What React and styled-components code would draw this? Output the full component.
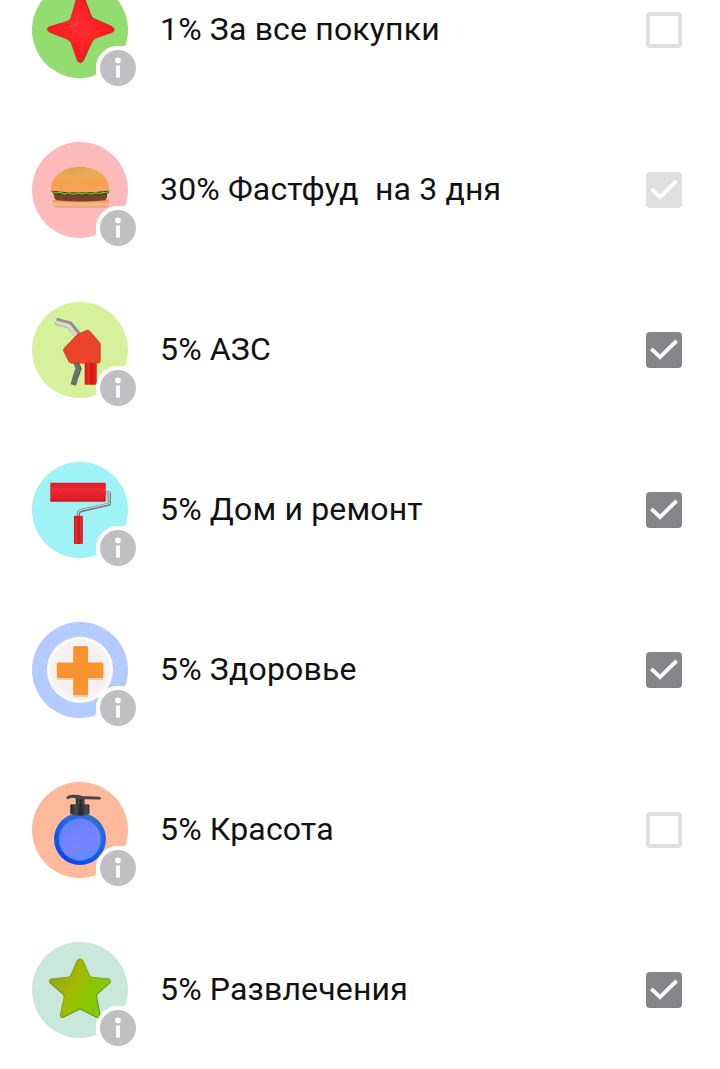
import React from "react";
import styled, { createGlobalStyle } from "styled-components";

const GlobalStyle = createGlobalStyle`
  body {
    margin: 0;
    background-color: #ffffff;
  }
`;

const Screen = styled.main`
  height: 1069px;
  overflow: hidden;
  font-family: Roboto, "Noto Sans", sans-serif;
`;

const List = styled.ul`
  margin: -50px 0 0;
  padding: 0;
  list-style: none;
`;

const Row = styled.li`
  display: flex;
  align-items: center;
  box-sizing: border-box;
  height: 160px;
  padding: 0 38px 0 32px;
`;

const IconSvg = styled.svg`
  flex: none;
  width: 104px;
  height: 104px;
  margin: 8px 24px 0 0;
`;

const Title = styled.span`
  flex: 1;
  font-size: 32px;
  line-height: 40px;
  letter-spacing: 0.16px;
  white-space: pre;
  color: #111113;
  margin-top: -2px;
`;

const Box = styled.span`
  display: block;
  box-sizing: border-box;
  width: 36px;
  height: 36px;
  border-radius: 4px;
  border: ${(props) => (props.$checked ? "none" : "4px solid #e0e0e0")};
  background-color: ${(props) =>
    !props.$checked ? "#ffffff" : props.$disabled ? "#e0e0e0" : "#858489"};
  svg {
    display: block;
  }
`;

const Sparkle = () => (
  <g>
    <defs>
      <radialGradient id="sparkle" cx="0.48" cy="0.48" r="0.5">
        <stop offset="0" stopColor="#ff3034" />
        <stop offset="0.5" stopColor="#fd2024" />
        <stop offset="1" stopColor="#f01c1f" />
      </radialGradient>
    </defs>
    <path
      d="M44.8 15.5Q48.3 10.5 52.2 15.5L58.8 33Q59.8 36 62.5 37.3L80.3 44.8Q84 47.6 80.5 50.3L63.4 56.3Q60.8 57.3 59.6 60L51.3 78.6Q48.3 83 45.3 78.6L39.4 61.5Q38.3 58.6 35.5 57.2L17.3 50Q13.5 47.3 17 44.8L35.5 39.3Q38.3 38 39.2 35Z"
      fill="url(#sparkle)"
      stroke="#d52a1f"
      strokeWidth="0.7"
    />
    <path
      d="M52.5 16.5L59.4 35.2L80 44.6M62.5 57L59 62L51.3 78.4"
      fill="none"
      stroke="#8f2b18"
      strokeWidth="0.8"
      opacity="0.6"
    />
    <path
      d="M48 20L44.5 43L22 47.5M49 75L51 53L72 48"
      fill="none"
      stroke="#ff5050"
      strokeWidth="1.5"
      opacity="0.22"
    />
  </g>
);

const Burger = () => (
  <g>
    <defs>
      <radialGradient id="bun" cx="0.4" cy="0.1" r="0.95">
        <stop offset="0" stopColor="#d9a355" />
        <stop offset="0.35" stopColor="#eea955" />
        <stop offset="0.75" stopColor="#fba04a" />
        <stop offset="1" stopColor="#f0a566" />
      </radialGradient>
      <linearGradient id="heel" x1="0" y1="0" x2="0" y2="1">
        <stop offset="0" stopColor="#dc9153" />
        <stop offset="0.5" stopColor="#f7b98d" />
        <stop offset="1" stopColor="#eba674" />
      </linearGradient>
    </defs>
    <path
      d="M20.5 58Q48 60 76.5 57.5Q77.3 60 76.8 63Q76 66 72 66H25Q20.5 65.5 20.3 61Z"
      fill="url(#heel)"
    />
    <path
      d="M21.5 51H75Q75.5 56.5 73 58.2Q48 61 24 58.2Q21.7 56 21.5 51Z"
      fill="#7a4027"
    />
    <path
      d="M19 48.5H77.5L76.7 51Q74 52.7 71 51.7Q67 53.5 63 51.8Q58 54 54 52.2Q50 54 46 52.3Q42 54 38 52Q33 53.5 29 51.8Q26 53 22 51.4Q19.5 51 19 48.5Z"
      fill="#24370f"
    />
    <path
      d="M19.7 49.3Q24 52 28 50.2Q33 53 37 50.8Q42 53.3 46 51Q50 53 54 51Q59 53 63 50.7Q68 52.4 71 50.3Q75 51.3 77 49"
      fill="none"
      stroke="#6fc52d"
      strokeWidth="1.3"
    />
    <path
      d="M19.2 47C19 33 33 24.7 48 24.7C64 24.7 77 34 77 46.5Q77 48.8 74 49Q48 52 22 49Q19.3 48.8 19.2 47Z"
      fill="url(#bun)"
    />
  </g>
);

const FuelNozzle = () => (
  <g>
    <defs>
      <linearGradient id="grip" x1="0" y1="0" x2="1" y2="0">
        <stop offset="0" stopColor="#c91814" />
        <stop offset="0.3" stopColor="#f02a22" />
        <stop offset="0.6" stopColor="#c9120f" />
        <stop offset="0.85" stopColor="#ee2520" />
        <stop offset="1" stopColor="#bf1713" />
      </linearGradient>
    </defs>
    <path
      d="M24 19.2L37.5 22.8L46.5 34"
      fill="none"
      stroke="#8f9182"
      strokeWidth="7"
      strokeLinejoin="round"
    />
    <path
      d="M24 20.2L36.8 23.9L45 34.5"
      fill="none"
      stroke="#dcd6d0"
      strokeWidth="4"
      strokeLinejoin="round"
    />
    <path
      d="M43.5 59L46.6 66.5L43.7 74.5L41.3 83"
      fill="none"
      stroke="#6a706c"
      strokeWidth="5.8"
      strokeLinejoin="round"
    />
    <path
      d="M45.5 61L49 66.5L46 75"
      fill="none"
      stroke="#4f5651"
      strokeWidth="0.8"
    />
    <rect x="52.7" y="58" width="12" height="24.7" rx="0.8" fill="url(#grip)" />
    <path
      d="M45.5 32.5L54.5 28.5Q56.5 27.7 58 29.5L67.2 40.2Q68.2 41.5 68.2 43V59.5Q68 61 66.5 61H39.5Q37.5 61 36.7 59L31.8 49.3Q31 47.8 32.3 46.3L44 34Z"
      fill="#ec432c"
      stroke="#d2331f"
      strokeWidth="0.9"
    />
  </g>
);

const PaintRoller = () => (
  <g>
    <defs>
      <linearGradient id="roller" x1="0" y1="0" x2="0" y2="1">
        <stop offset="0" stopColor="#dc1b28" />
        <stop offset="0.3" stopColor="#ef2935" />
        <stop offset="0.75" stopColor="#e5212d" />
        <stop offset="1" stopColor="#c81620" />
      </linearGradient>
      <linearGradient id="handle" x1="0" y1="0" x2="1" y2="0">
        <stop offset="0" stopColor="#c4181a" />
        <stop offset="0.3" stopColor="#ee2a2b" />
        <stop offset="0.55" stopColor="#c91315" />
        <stop offset="0.75" stopColor="#f02829" />
        <stop offset="1" stopColor="#b91517" />
      </linearGradient>
    </defs>
    <path
      d="M73 31H77.3V42.2L49 48.6Q46.4 49.3 46.4 52V55"
      fill="none"
      stroke="#6c7778"
      strokeWidth="3.2"
      strokeLinejoin="round"
    />
    <path
      d="M73 31H77.2V41.7L49 48.1Q46.2 49 46.2 52V55"
      fill="none"
      stroke="#cbd0cd"
      strokeWidth="1.3"
      strokeLinejoin="round"
    />
    <rect x="18.2" y="20.8" width="55.6" height="18.9" rx="1" fill="url(#roller)" />
    <path
      d="M22 25H70M24 29.5H69M21 34H71"
      stroke="#c81c2b"
      strokeWidth="0.8"
      strokeDasharray="1.5 2.7 0.8 1.9"
      opacity="0.65"
    />
    <rect x="42" y="53.7" width="8.8" height="28.4" rx="1" fill="url(#handle)" />
  </g>
);

const Health = () => (
  <g>
    <defs>
      <radialGradient id="plate" cx="0.5" cy="0.5" r="0.5">
        <stop offset="0.7" stopColor="#f4f0f0" />
        <stop offset="0.9" stopColor="#f7f4f4" />
        <stop offset="0.96" stopColor="#ffffff" />
        <stop offset="1" stopColor="#eaf0fb" />
      </radialGradient>
    </defs>
    <circle cx="48" cy="47.8" r="33.2" fill="url(#plate)" />
    <path
      d="M42 27H55V42.5H71V58H56V75H41.5V58H25V42.5H42Z"
      fill="#f7c39a"
      opacity="0.8"
    />
    <path
      d="M42.5 24.4H54.8Q56 24.4 56 25.6V40.5H70.2Q71.4 40.5 71.4 41.7V54.7Q71.4 55.8 70.2 55.8H56V71.9Q56 73 54.8 73H42.3Q41.2 73 41.2 71.9V55.8H25.9Q24.8 55.8 24.8 54.7V41.7Q24.8 40.5 25.9 40.5H41.2V25.6Q41.2 24.4 42.5 24.4Z"
      fill="#fa942f"
    />
    <path
      d="M41.8 24.8H55.4M25.3 55.3H41M56 55.3H71"
      fill="none"
      stroke="#ee8a37"
      strokeWidth="0.9"
    />
  </g>
);

const Bottle = () => (
  <g>
    <defs>
      <linearGradient id="glass" x1="0.85" y1="0" x2="0.3" y2="1">
        <stop offset="0" stopColor="#356ebd" />
        <stop offset="0.35" stopColor="#2467e0" />
        <stop offset="1" stopColor="#0746ed" />
      </linearGradient>
      <linearGradient id="liquid" x1="0.2" y1="0" x2="0.7" y2="1">
        <stop offset="0" stopColor="#6580fc" />
        <stop offset="0.6" stopColor="#7785ff" />
        <stop offset="1" stopColor="#628bff" />
      </linearGradient>
      <linearGradient id="cap" x1="0" y1="0" x2="1" y2="0">
        <stop offset="0" stopColor="#252729" />
        <stop offset="0.3" stopColor="#4b4c4e" />
        <stop offset="0.55" stopColor="#252628" />
        <stop offset="0.85" stopColor="#4d4e50" />
        <stop offset="1" stopColor="#292a2b" />
      </linearGradient>
    </defs>
    <circle cx="48" cy="57" r="26" fill="url(#glass)" />
    <circle cx="48" cy="57.4" r="21" fill="url(#liquid)" stroke="#3a7af9" strokeWidth="1" />
    <rect x="43.8" y="15" width="8.7" height="9" fill="url(#cap)" />
    <path d="M38.3 23.5Q38.3 22.3 39.5 22.3H56.2Q57.4 22.3 57.4 23.5V32Q48 35.3 38.3 32Z" fill="url(#cap)" />
    <path
      d="M34.2 15.2Q37 12.8 41 12.8Q46 12.6 51 14.2L68 14.7Q69.7 15.8 68.3 17.5L53 17.2Q45 17.8 42 15.9Q39 15.3 35.8 17.2Q34 16.8 34.2 15.2Z"
      fill="#444447"
    />
  </g>
);

const Star = () => (
  <g>
    <defs>
      <linearGradient id="star" x1="0.1" y1="0.25" x2="0.9" y2="0.65">
        <stop offset="0" stopColor="#8fa90e" />
        <stop offset="0.35" stopColor="#a6b600" />
        <stop offset="0.65" stopColor="#8dc500" />
        <stop offset="1" stopColor="#83c90c" />
      </linearGradient>
    </defs>
    <path
      d="M45.2 18.4Q48 15.5 50.9 18.4L57.4 33Q58.3 34.9 60.4 35.3L77 36.9Q80.2 38 77.9 41L65.2 52.2Q64 53.5 64.3 55.5L68.2 73.7Q67.8 76.6 64.8 75.6L50 67.8Q48 66.8 46 67.8L31.2 75.6Q28 76.5 28.2 73.5L32 55.7Q32.4 53.5 30.8 52L18 41Q15.8 38 19 36.9L35.6 35.3Q38 34.9 38.9 32.8Z"
      fill="url(#star)"
      stroke="#799713"
      strokeWidth="0.8"
    />
    <path
      d="M78 40.7L64.5 52.7L68 74M64.8 75.3L48 67L30.8 75.3M18.3 41L32 53"
      fill="none"
      stroke="#627d1c"
      strokeWidth="1"
      opacity="0.7"
    />
  </g>
);

const categories = [
  { title: "1% За все покупки", color: "#92dc70", Icon: Sparkle },
  { title: "30% Фастфуд  на 3 дня", color: "#fcbabb", Icon: Burger, checked: true, disabled: true },
  { title: "5% АЗС", color: "#d6f19b", Icon: FuelNozzle, checked: true },
  { title: "5% Дом и ремонт", color: "#9ff3f6", Icon: PaintRoller, checked: true },
  { title: "5% Здоровье", color: "#b3cbff", Icon: Health, checked: true },
  { title: "5% Красота", color: "#ffba9c", Icon: Bottle },
  { title: "5% Развлечения", color: "#c9e8dc", Icon: Star, checked: true },
];

const CategoryIcon = ({ color, Icon }) => (
  <IconSvg viewBox="0 0 104 104">
    <path
      d="M94.07 61.47A4 4 0 0 1 89.58 64.3A22 22 0 0 0 64.3 89.58A4 4 0 0 1 61.47 94.07A48 48 0 1 1 94.07 61.47Z"
      fill={color}
    />
    <Icon />
    {/* info badge */}
    <circle cx="86" cy="86" r="20" fill="#c0bfc1" stroke="#ffffff" strokeWidth="4" />
    <circle cx="86" cy="78.4" r="2.8" fill="#ffffff" />
    <rect x="84" y="83.6" width="4" height="12" fill="#ffffff" />
  </IconSvg>
);

const Checkbox = ({ checked, disabled }) => (
  <Box
    role="checkbox"
    aria-checked={!!checked}
    aria-disabled={!!disabled}
    $checked={checked}
    $disabled={disabled}
  >
    {checked && (
      <svg width="36" height="36" viewBox="0 0 36 36">
        <path d="M5.4 16.8L14 25.2L30.6 8.8" fill="none" stroke="#ffffff" strokeWidth="3.8" />
      </svg>
    )}
  </Box>
);

const App = () => {
  return (
    <>
      <GlobalStyle />
      <Screen>
        <List>
          {categories.map((item) => (
            <Row key={item.title}>
              <CategoryIcon color={item.color} Icon={item.Icon} />
              <Title>{item.title}</Title>
              <Checkbox checked={item.checked} disabled={item.disabled} />
            </Row>
          ))}
        </List>
      </Screen>
    </>
  );
};

export default App;
